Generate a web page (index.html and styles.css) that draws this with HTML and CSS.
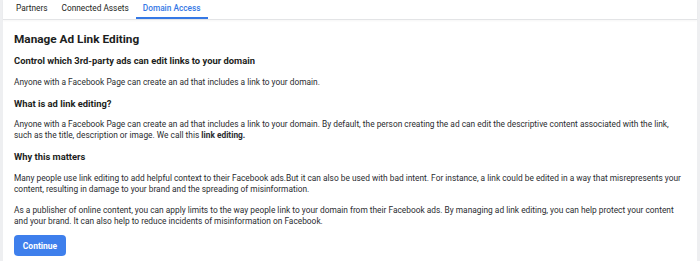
FILE: index.html
```html
<!DOCTYPE html>
<html>
<head>
<meta charset="utf-8">
<link rel="stylesheet" href="styles.css">
</head>
<body>
<div class="page">
  <nav class="tabs">
    <div class="tab">Partners</div>
    <div class="tab">Connected Assets</div>
    <div class="tab active">Domain Access</div>
  </nav>
  <main class="content">
    <h1 class="title">Manage Ad Link Editing</h1>
    <h2 class="subtitle">Control which 3rd-party ads can edit links to your domain</h2>
    <p class="text">Anyone with a Facebook Page can create an ad that includes a link to your domain.</p>
    <h2 class="subtitle">What is ad link editing?</h2>
    <p class="text">Anyone with a Facebook Page can create an ad that includes a link to your domain. By default, the person creating the ad can edit the descriptive content associated with the link, such as the title, description or image. We call this <b>link editing.</b></p>
    <h2 class="subtitle">Why this matters</h2>
    <p class="text">Many people use link editing to add helpful context to their Facebook ads.But it can also be used with bad intent. For instance, a link could be edited in a way that misrepresents your content, resulting in damage to your brand and the spreading of misinformation.</p>
    <p class="text">As a publisher of online content, you can apply limits to the way people link to your domain from their Facebook ads. By managing ad link editing, you can help protect your content and your brand. It can also help to reduce incidents of misinformation on Facebook.</p>
    <button class="btn">Continue</button>
  </main>
</div>
</body>
</html>
```
FILE: styles.css
```css
html, body {
  margin: 0;
  padding: 0;
  background: #eeeff1;
  height: 100%;
}
body {
  font-family: Roboto, "Liberation Sans", sans-serif;
  color: #1c1e21;
}
.page {
  margin: 0 3px;
  background: #fff;
  min-height: 100%;
}
.tabs {
  display: flex;
  height: 19px;
  padding-left: 6px;
  border-bottom: 1px solid #e3e4e6;
  box-shadow: 0 1px 2px rgba(0,0,0,0.04);
}
.tab {
  padding: 0 7px;
  font-size: 8.3px;
  line-height: 17px;
  color: #1c1e21;
  border-bottom: 2px solid transparent;
}
.tab.active {
  color: #3578e5;
  font-weight: 500;
  border-bottom-color: #3578e5;
}
.content {
  padding: 11px 13px 0 11px;
}
.title {
  margin: 0 0 8px;
  font-size: 11.8px;
  line-height: 16px;
  font-weight: 700;
}
.subtitle {
  margin: 0 0 9.5px;
  font-size: 9.4px;
  line-height: 12px;
  font-weight: 700;
}
.text {
  margin: 0 0 10px;
  font-size: 8.35px;
  line-height: 11px;
  color: #2a2c30;
}
.btn {
  display: block;
  margin-top: -1.5px;
  width: 52px;
  height: 21px;
  border: 0;
  border-radius: 4px;
  background: #3e7fec;
  color: #fff;
  font-family: Roboto, "Liberation Sans", sans-serif;
  font-weight: 700;
  font-size: 8.5px;
  padding: 0;
}
```
